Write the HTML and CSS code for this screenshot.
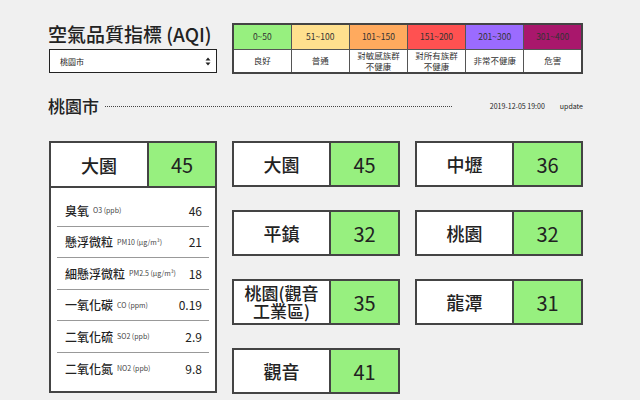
FILE: index.html
```html
<!DOCTYPE html>
<html lang="zh-Hant">
<head>
<meta charset="utf-8">
<title>空氣品質指標 (AQI)</title>
<link rel="stylesheet" href="styles.css">
</head>
<body>
<div class="page">
  <header class="top">
    <div class="top-left">
      <h1 class="title">空氣品質指標 (AQI)</h1>
      <div class="select">
        <span>桃園市</span>
        <svg class="arrows" width="6" height="9" viewBox="0 0 6 9"><path d="M3 0.5 L5.5 3.5 H0.5 Z M3 8.5 L5.5 5.5 H0.5 Z" fill="#222"/></svg>
      </div>
    </div>
    <table class="legend">
      <tr class="range">
        <td class="c1">0~50</td>
        <td class="c2">51~100</td>
        <td class="c3">101~150</td>
        <td class="c4">151~200</td>
        <td class="c5">201~300</td>
        <td class="c6">301~400</td>
      </tr>
      <tr class="desc">
        <td>良好</td>
        <td>普通</td>
        <td>對敏感族群<br>不健康</td>
        <td>對所有族群<br>不健康</td>
        <td>非常不健康</td>
        <td>危害</td>
      </tr>
    </table>
  </header>

  <div class="section-head">
    <h2 class="city">桃園市</h2>
    <div class="dots"></div>
    <span class="time">2019-12-05 19:00</span>
    <span class="upd">update</span>
  </div>

  <div class="main">
    <div class="big">
      <div class="big-head">
        <div class="big-name">大園</div>
        <div class="big-val">45</div>
      </div>
      <ul class="details">
        <li><span class="lab">臭氧</span><span class="sub">O3 (ppb)</span><span class="num">46</span></li>
        <li><span class="lab">懸浮微粒</span><span class="sub">PM10 (μg/m³)</span><span class="num">21</span></li>
        <li><span class="lab">細懸浮微粒</span><span class="sub">PM2.5 (μg/m³)</span><span class="num">18</span></li>
        <li><span class="lab">一氧化碳</span><span class="sub">CO (ppm)</span><span class="num">0.19</span></li>
        <li><span class="lab">二氧化硫</span><span class="sub">SO2 (ppb)</span><span class="num">2.9</span></li>
        <li><span class="lab">二氧化氮</span><span class="sub">NO2 (ppb)</span><span class="num">9.8</span></li>
      </ul>
    </div>
    <div class="cards">
      <div class="card"><div class="name">大園</div><div class="val">45</div></div>
      <div class="card"><div class="name">中壢</div><div class="val">36</div></div>
      <div class="card"><div class="name">平鎮</div><div class="val">32</div></div>
      <div class="card"><div class="name">桃園</div><div class="val">32</div></div>
      <div class="card"><div class="name long"><span class="ln">桃園(觀音</span><span class="ln">工業區)</span></div><div class="val">35</div></div>
      <div class="card"><div class="name">龍潭</div><div class="val">31</div></div>
      <div class="card"><div class="name">觀音</div><div class="val">41</div></div>
    </div>
  </div>
</div>
</body>
</html>
```

FILE: styles.css
```css
* { box-sizing: border-box; }
html, body { margin: 0; padding: 0; }
body {
  background: #f0f0f0;
  color: #222;
  font-family: "Noto Sans CJK TC", "Noto Sans", sans-serif;
}
.page {
  width: 534px;
  margin-left: 49px;
  padding-top: 20px;
}
.top {
  display: flex;
  justify-content: space-between;
  align-items: flex-start;
}
.top-left { width: 168px; }
.title {
  margin: 0 0 0 -1px;
  font-size: 19px;
  font-weight: 500;
  line-height: 28px;
  white-space: nowrap;
  color: #222;
}
.select {
  margin-top: 1px;
  height: 24px;
  background: #fff;
  border: 1px solid #222;
  display: flex;
  align-items: center;
  justify-content: space-between;
  padding: 0 5px 0 10px;
  font-size: 8px;
}
.legend {
  margin-top: 3px;
  width: 351px;
  border-collapse: collapse;
  border: 2px solid #444;
  table-layout: fixed;
  font-size: 8.5px;
  color: #333;
}
.legend td {
  border: 1px solid #555;
  text-align: center;
  padding: 0;
  line-height: 11px;
}
.legend .range td { height: 25px; }
.legend .desc td { height: 24px; background: #fff; }
.c1 { background: #97f07f; }
.c2 { background: #ffe08e; }
.c3 { background: #ffaa5e; }
.c4 { background: #ff5151; }
.c5 { background: #9b6bff; }
.c6 { background: #a9176c; }

.section-head {
  display: flex;
  align-items: center;
  margin-top: 20px;
  height: 24px;
}
.city {
  margin: 0 0 0 -1px;
  font-size: 17px;
  font-weight: 500;
  line-height: 24px;
}
.dots {
  flex: 1;
  margin: 0 38px 0 6px;
  border-bottom: 1px dotted #444;
  height: 0;
}
.time, .upd { font-size: 7px; color: #222; }
.upd { margin-left: 15px; }

.main {
  display: flex;
  gap: 15px;
  margin-top: 23px;
  align-items: flex-start;
}
.big {
  width: 168px;
  background: #fff;
  border: 2px solid #444;
}
.big-head {
  display: flex;
  height: 45px;
  border-bottom: 2px solid #444;
}
.big-name {
  width: 96px;
  display: flex;
  align-items: center;
  justify-content: center;
  font-size: 18px;
  font-weight: 500;
}
.big-val {
  flex: 1;
  background: #97f07f;
  border-left: 2px solid #444;
  display: flex;
  align-items: center;
  justify-content: center;
  font-size: 20px;
}
.details {
  list-style: none;
  margin: 0;
  padding: 7px 6px 7px;
}
.details li {
  display: flex;
  align-items: center;
  height: 31.5px;
  padding: 0 7px 0 8px;
  border-bottom: 1px solid #999;
}
.details li:last-child { border-bottom: none; }
.lab { font-size: 12px; font-weight: 500; }
.sub { font-size: 7px; color: #444; margin-left: 4px; }
.num { margin-left: auto; font-size: 12px; }

.cards {
  display: grid;
  grid-template-columns: 168px 168px;
  column-gap: 15px;
  row-gap: 23px;
}
.card {
  display: flex;
  height: 46px;
  border: 2px solid #444;
  background: #fff;
}
.card .name {
  width: 95px;
  display: flex;
  align-items: center;
  justify-content: center;
  text-align: center;
  font-size: 18px;
  font-weight: 500;
}
.card .name.long {
  flex-direction: column;
  font-size: 17px;
  line-height: 18px;
}
.card .name.long .ln { display: block; white-space: nowrap; }
.card .val {
  flex: 1;
  background: #97f07f;
  border-left: 2px solid #444;
  display: flex;
  align-items: center;
  justify-content: center;
  font-size: 20px;
}
```
